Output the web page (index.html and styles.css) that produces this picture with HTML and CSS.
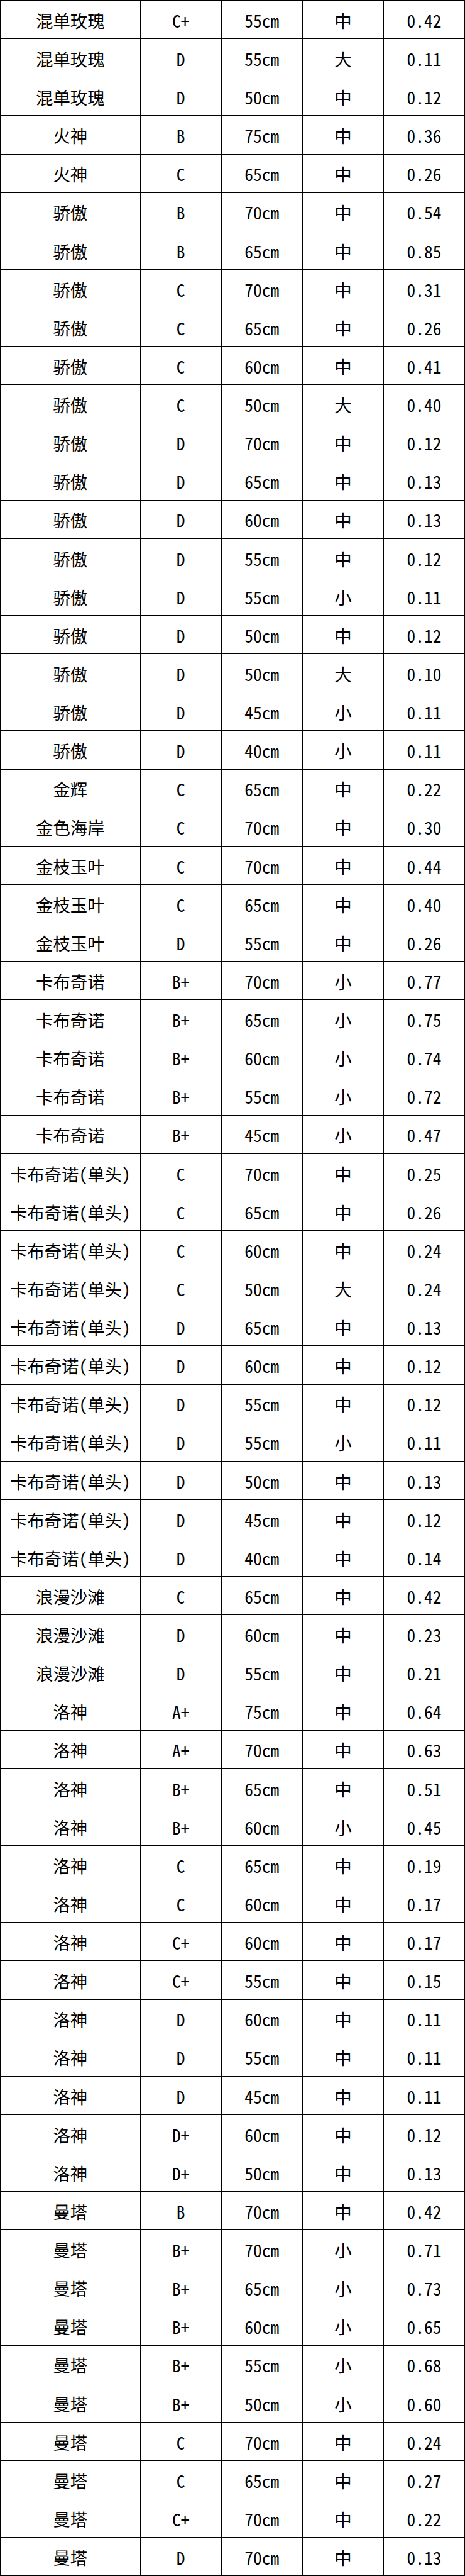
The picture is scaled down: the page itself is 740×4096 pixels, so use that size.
FILE: index.html
```html
<!DOCTYPE html>
<html lang="zh-CN">
<head>
<meta charset="utf-8">
<title>价格表</title>
<link rel="stylesheet" href="styles.css">
</head>
<body>
<div class="grid">
<div class="cell">混单玫瑰</div><div class="cell">C+</div><div class="cell">55cm</div><div class="cell">中</div><div class="cell">0.42</div>
<div class="cell">混单玫瑰</div><div class="cell">D</div><div class="cell">55cm</div><div class="cell">大</div><div class="cell">0.11</div>
<div class="cell">混单玫瑰</div><div class="cell">D</div><div class="cell">50cm</div><div class="cell">中</div><div class="cell">0.12</div>
<div class="cell">火神</div><div class="cell">B</div><div class="cell">75cm</div><div class="cell">中</div><div class="cell">0.36</div>
<div class="cell">火神</div><div class="cell">C</div><div class="cell">65cm</div><div class="cell">中</div><div class="cell">0.26</div>
<div class="cell">骄傲</div><div class="cell">B</div><div class="cell">70cm</div><div class="cell">中</div><div class="cell">0.54</div>
<div class="cell">骄傲</div><div class="cell">B</div><div class="cell">65cm</div><div class="cell">中</div><div class="cell">0.85</div>
<div class="cell">骄傲</div><div class="cell">C</div><div class="cell">70cm</div><div class="cell">中</div><div class="cell">0.31</div>
<div class="cell">骄傲</div><div class="cell">C</div><div class="cell">65cm</div><div class="cell">中</div><div class="cell">0.26</div>
<div class="cell">骄傲</div><div class="cell">C</div><div class="cell">60cm</div><div class="cell">中</div><div class="cell">0.41</div>
<div class="cell">骄傲</div><div class="cell">C</div><div class="cell">50cm</div><div class="cell">大</div><div class="cell">0.40</div>
<div class="cell">骄傲</div><div class="cell">D</div><div class="cell">70cm</div><div class="cell">中</div><div class="cell">0.12</div>
<div class="cell">骄傲</div><div class="cell">D</div><div class="cell">65cm</div><div class="cell">中</div><div class="cell">0.13</div>
<div class="cell">骄傲</div><div class="cell">D</div><div class="cell">60cm</div><div class="cell">中</div><div class="cell">0.13</div>
<div class="cell">骄傲</div><div class="cell">D</div><div class="cell">55cm</div><div class="cell">中</div><div class="cell">0.12</div>
<div class="cell">骄傲</div><div class="cell">D</div><div class="cell">55cm</div><div class="cell">小</div><div class="cell">0.11</div>
<div class="cell">骄傲</div><div class="cell">D</div><div class="cell">50cm</div><div class="cell">中</div><div class="cell">0.12</div>
<div class="cell">骄傲</div><div class="cell">D</div><div class="cell">50cm</div><div class="cell">大</div><div class="cell">0.10</div>
<div class="cell">骄傲</div><div class="cell">D</div><div class="cell">45cm</div><div class="cell">小</div><div class="cell">0.11</div>
<div class="cell">骄傲</div><div class="cell">D</div><div class="cell">40cm</div><div class="cell">小</div><div class="cell">0.11</div>
<div class="cell">金辉</div><div class="cell">C</div><div class="cell">65cm</div><div class="cell">中</div><div class="cell">0.22</div>
<div class="cell">金色海岸</div><div class="cell">C</div><div class="cell">70cm</div><div class="cell">中</div><div class="cell">0.30</div>
<div class="cell">金枝玉叶</div><div class="cell">C</div><div class="cell">70cm</div><div class="cell">中</div><div class="cell">0.44</div>
<div class="cell">金枝玉叶</div><div class="cell">C</div><div class="cell">65cm</div><div class="cell">中</div><div class="cell">0.40</div>
<div class="cell">金枝玉叶</div><div class="cell">D</div><div class="cell">55cm</div><div class="cell">中</div><div class="cell">0.26</div>
<div class="cell">卡布奇诺</div><div class="cell">B+</div><div class="cell">70cm</div><div class="cell">小</div><div class="cell">0.77</div>
<div class="cell">卡布奇诺</div><div class="cell">B+</div><div class="cell">65cm</div><div class="cell">小</div><div class="cell">0.75</div>
<div class="cell">卡布奇诺</div><div class="cell">B+</div><div class="cell">60cm</div><div class="cell">小</div><div class="cell">0.74</div>
<div class="cell">卡布奇诺</div><div class="cell">B+</div><div class="cell">55cm</div><div class="cell">小</div><div class="cell">0.72</div>
<div class="cell">卡布奇诺</div><div class="cell">B+</div><div class="cell">45cm</div><div class="cell">小</div><div class="cell">0.47</div>
<div class="cell">卡布奇诺(单头)</div><div class="cell">C</div><div class="cell">70cm</div><div class="cell">中</div><div class="cell">0.25</div>
<div class="cell">卡布奇诺(单头)</div><div class="cell">C</div><div class="cell">65cm</div><div class="cell">中</div><div class="cell">0.26</div>
<div class="cell">卡布奇诺(单头)</div><div class="cell">C</div><div class="cell">60cm</div><div class="cell">中</div><div class="cell">0.24</div>
<div class="cell">卡布奇诺(单头)</div><div class="cell">C</div><div class="cell">50cm</div><div class="cell">大</div><div class="cell">0.24</div>
<div class="cell">卡布奇诺(单头)</div><div class="cell">D</div><div class="cell">65cm</div><div class="cell">中</div><div class="cell">0.13</div>
<div class="cell">卡布奇诺(单头)</div><div class="cell">D</div><div class="cell">60cm</div><div class="cell">中</div><div class="cell">0.12</div>
<div class="cell">卡布奇诺(单头)</div><div class="cell">D</div><div class="cell">55cm</div><div class="cell">中</div><div class="cell">0.12</div>
<div class="cell">卡布奇诺(单头)</div><div class="cell">D</div><div class="cell">55cm</div><div class="cell">小</div><div class="cell">0.11</div>
<div class="cell">卡布奇诺(单头)</div><div class="cell">D</div><div class="cell">50cm</div><div class="cell">中</div><div class="cell">0.13</div>
<div class="cell">卡布奇诺(单头)</div><div class="cell">D</div><div class="cell">45cm</div><div class="cell">中</div><div class="cell">0.12</div>
<div class="cell">卡布奇诺(单头)</div><div class="cell">D</div><div class="cell">40cm</div><div class="cell">中</div><div class="cell">0.14</div>
<div class="cell">浪漫沙滩</div><div class="cell">C</div><div class="cell">65cm</div><div class="cell">中</div><div class="cell">0.42</div>
<div class="cell">浪漫沙滩</div><div class="cell">D</div><div class="cell">60cm</div><div class="cell">中</div><div class="cell">0.23</div>
<div class="cell">浪漫沙滩</div><div class="cell">D</div><div class="cell">55cm</div><div class="cell">中</div><div class="cell">0.21</div>
<div class="cell">洛神</div><div class="cell">A+</div><div class="cell">75cm</div><div class="cell">中</div><div class="cell">0.64</div>
<div class="cell">洛神</div><div class="cell">A+</div><div class="cell">70cm</div><div class="cell">中</div><div class="cell">0.63</div>
<div class="cell">洛神</div><div class="cell">B+</div><div class="cell">65cm</div><div class="cell">中</div><div class="cell">0.51</div>
<div class="cell">洛神</div><div class="cell">B+</div><div class="cell">60cm</div><div class="cell">小</div><div class="cell">0.45</div>
<div class="cell">洛神</div><div class="cell">C</div><div class="cell">65cm</div><div class="cell">中</div><div class="cell">0.19</div>
<div class="cell">洛神</div><div class="cell">C</div><div class="cell">60cm</div><div class="cell">中</div><div class="cell">0.17</div>
<div class="cell">洛神</div><div class="cell">C+</div><div class="cell">60cm</div><div class="cell">中</div><div class="cell">0.17</div>
<div class="cell">洛神</div><div class="cell">C+</div><div class="cell">55cm</div><div class="cell">中</div><div class="cell">0.15</div>
<div class="cell">洛神</div><div class="cell">D</div><div class="cell">60cm</div><div class="cell">中</div><div class="cell">0.11</div>
<div class="cell">洛神</div><div class="cell">D</div><div class="cell">55cm</div><div class="cell">中</div><div class="cell">0.11</div>
<div class="cell">洛神</div><div class="cell">D</div><div class="cell">45cm</div><div class="cell">中</div><div class="cell">0.11</div>
<div class="cell">洛神</div><div class="cell">D+</div><div class="cell">60cm</div><div class="cell">中</div><div class="cell">0.12</div>
<div class="cell">洛神</div><div class="cell">D+</div><div class="cell">50cm</div><div class="cell">中</div><div class="cell">0.13</div>
<div class="cell">曼塔</div><div class="cell">B</div><div class="cell">70cm</div><div class="cell">中</div><div class="cell">0.42</div>
<div class="cell">曼塔</div><div class="cell">B+</div><div class="cell">70cm</div><div class="cell">小</div><div class="cell">0.71</div>
<div class="cell">曼塔</div><div class="cell">B+</div><div class="cell">65cm</div><div class="cell">小</div><div class="cell">0.73</div>
<div class="cell">曼塔</div><div class="cell">B+</div><div class="cell">60cm</div><div class="cell">小</div><div class="cell">0.65</div>
<div class="cell">曼塔</div><div class="cell">B+</div><div class="cell">55cm</div><div class="cell">小</div><div class="cell">0.68</div>
<div class="cell">曼塔</div><div class="cell">B+</div><div class="cell">50cm</div><div class="cell">小</div><div class="cell">0.60</div>
<div class="cell">曼塔</div><div class="cell">C</div><div class="cell">70cm</div><div class="cell">中</div><div class="cell">0.24</div>
<div class="cell">曼塔</div><div class="cell">C</div><div class="cell">65cm</div><div class="cell">中</div><div class="cell">0.27</div>
<div class="cell">曼塔</div><div class="cell">C+</div><div class="cell">70cm</div><div class="cell">中</div><div class="cell">0.22</div>
<div class="cell">曼塔</div><div class="cell">D</div><div class="cell">70cm</div><div class="cell">中</div><div class="cell">0.13</div>
</div>
</body>
</html>
```

FILE: styles.css
```css
html, body {
  margin: 0;
  padding: 0;
  background: #fff;
}

.grid {
  display: grid;
  width: 740px;
  box-sizing: border-box;
  grid-template-columns: 222.6px repeat(4, 1fr);
  grid-auto-rows: 61.13px;
  border-top: 1.5px solid #000;
  border-left: 1.5px solid #000;
  font-family: "Noto Sans Mono CJK SC", "Noto Sans CJK SC", sans-serif;
  font-size: 27.4px;
  color: #000;
}

.cell {
  display: flex;
  align-items: center;
  justify-content: center;
  padding-top: 3px;
  box-sizing: border-box;
  border-right: 1.5px solid #000;
  border-bottom: 1.5px solid #000;
  white-space: nowrap;
  line-height: 1;
}
```
